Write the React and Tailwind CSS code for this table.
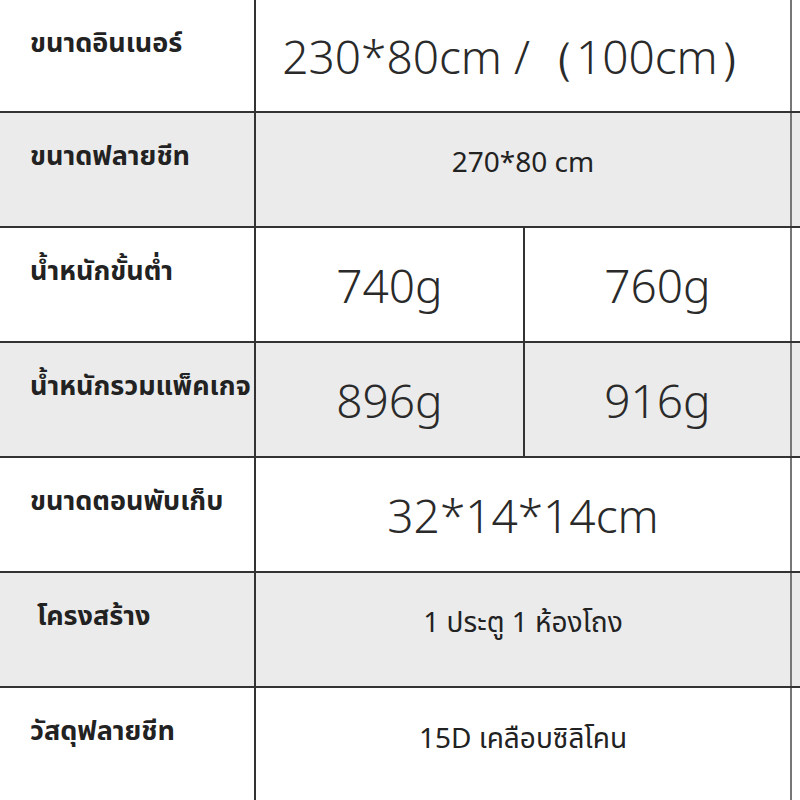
import React from "react";

const rows = [
    { label: "ขนาดอินเนอร์", values: ["230*80cm /（100cm）"], big: true, gray: false, h: "h-[113px]" },
    { label: "ขนาดฟลายชีท", values: ["270*80 cm"], big: false, gray: true },
    { label: "น้ำหนักขั้นต่ำ", values: ["740g", "760g"], big: true, gray: false },
    { label: "น้ำหนักรวมแพ็คเกจ", values: ["896g", "916g"], big: true, gray: true },
    { label: "ขนาดตอนพับเก็บ", values: ["32*14*14cm"], big: true, gray: false },
    { label: "โครงสร้าง", values: ["1 ประตู 1 ห้องโถง"], big: false, gray: true, indent: true },
    { label: "วัสดุฟลายชีท", values: ["15D เคลือบซิลิโคน"], big: false, gray: false, last: true },
]

const Value = ({ text, big }) => (
    big ? (
        <span className="text-[46px] font-light leading-none text-[#2a2a2a]">{text}</span>
    ) : (
        <span className="-mt-[18px] text-[28px] leading-none text-[#222]">{text}</span>
    )
)

const App = () => {
    return (
        <div className="w-[800px] h-[800px] overflow-hidden bg-white text-[#222]"
            style={{ fontFamily: '"Noto Sans", "Noto Sans Thai", Tahoma, sans-serif' }}>
            {rows.map((row, i) => (
                <div key={i}
                    className={`flex ${row.h || 'h-[115px]'} ${row.last ? '' : 'border-b-2 border-[#333]'} ${row.gray ? 'bg-[#ebebeb]' : 'bg-white'}`}>
                    <div className={`w-[256px] shrink-0 border-r-2 border-[#333] ${row.indent ? 'pl-[37px]' : 'pl-[30px]'} pt-[28px]`}>
                        <span className="text-[27px] font-bold leading-none text-[#222]">{row.label}</span>
                    </div>
                    <div className="flex w-[536px] shrink-0 border-r-2 border-[#777]">
                        {row.values.length === 1 ? (
                            <div className="flex flex-1 items-center justify-center">
                                <Value text={row.values[0]} big={row.big} />
                            </div>
                        ) : (
                            <>
                                <div className="flex w-[269px] items-center justify-center border-r-2 border-[#333]">
                                    <Value text={row.values[0]} big={row.big} />
                                </div>
                                <div className="flex flex-1 items-center justify-center">
                                    <Value text={row.values[1]} big={row.big} />
                                </div>
                            </>
                        )}
                    </div>
                    <div className="flex-1" />
                </div>
            ))}
        </div>
    )
}

export default App
